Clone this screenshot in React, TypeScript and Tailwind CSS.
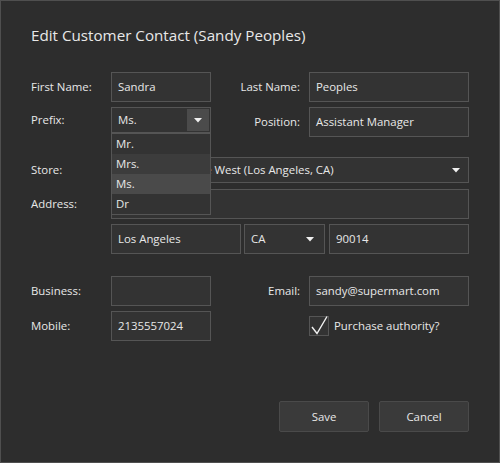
import React from "react";

const field = "h-[30px] border border-[#555555] bg-[#333333] px-[6px] flex items-center";

function Arrow() {
    return (
        <svg width="8" height="5" viewBox="0 0 8 5" className="block">
            <path d="M0 0 H8 L4 4.5 Z" fill="#f0f0f0" />
        </svg>
    );
}

function Label({ children, right }: { children: React.ReactNode; right?: boolean }) {
    return (
        <div className={right ? "flex-1 text-right pr-[9px]" : "w-[80px]"}>{children}</div>
    );
}

export default function App() {
    const prefixes = ["Mr.", "Mrs.", "Ms.", "Dr"];

    return (
        <div className="w-[500px] h-[463px] border border-[#4f4f4f] bg-[#2d2d2d] text-[#e8e8e8] text-[11.4px] font-['Open_Sans',sans-serif]">
            <div className="px-[30px] pt-[23px]">
                <h1 className="text-[15.2px] leading-[22px]">
                    Edit Customer Contact (Sandy Peoples)
                </h1>

                {/* name */}
                <div className="mt-[26px] flex items-center h-[30px]">
                    <Label>First Name:</Label>
                    <div className={`${field} w-[100px]`}>Sandra</div>
                    <Label right>Last Name:</Label>
                    <div className={`${field} w-[160px]`}>Peoples</div>
                </div>

                {/* prefix / position */}
                <div className="mt-[5px] flex items-start h-[30px]">
                    <div className="w-[80px] h-[26px] flex items-center">Prefix:</div>
                    <div className="relative w-[100px] h-[26px] border border-[#555555] bg-[#333333] flex items-center p-[1px]">
                        <span className="flex-1 pl-[5px]">Ms.</span>
                        <div className="w-[22px] h-full bg-[#4b4b4b] flex items-center justify-center">
                            <Arrow />
                        </div>
                        <div className="absolute left-[-1px] top-[25px] w-[100px] border border-[#555555] bg-[#333333] z-10">
                            {prefixes.map((p) => (
                                <div
                                    key={p}
                                    className={`h-[20px] pl-[4px] flex items-center ${
                                        p === "Ms." ? "bg-[#4a4a4a]" : p === "Mrs." ? "bg-[#3c3c3c]" : ""
                                    }`}
                                >
                                    {p}
                                </div>
                            ))}
                        </div>
                    </div>
                    <div className="flex-1 h-[30px] flex items-center justify-end pr-[9px]">Position:</div>
                    <div className={`${field} w-[160px]`}>Assistant Manager</div>
                </div>

                {/* store */}
                <div className="mt-[20px] flex items-center h-[26px]">
                    <Label>Store:</Label>
                    <div className="flex-1 h-[26px] border border-[#555555] bg-[#333333] flex items-center pl-[6px] pr-[8px]">
                        <span className="flex-1 whitespace-nowrap overflow-hidden">
                            Super Mart of the West (Los Angeles, CA)
                        </span>
                        <Arrow />
                    </div>
                </div>

                {/* address */}
                <div className="mt-[6px] flex items-center h-[30px]">
                    <Label>Address:</Label>
                    <div className={`${field} flex-1`}></div>
                </div>

                <div className="mt-[5px] flex items-center h-[30px]">
                    <div className="w-[80px]" />
                    <div className={`${field} w-[130px]`}>Los Angeles</div>
                    <div className={`${field} w-[81px] ml-[3px] justify-between pr-[10px]`}>
                        <span>CA</span>
                        <Arrow />
                    </div>
                    <div className={`${field} flex-1 ml-[4px]`}>90014</div>
                </div>

                {/* phones */}
                <div className="mt-[22px] flex items-center h-[30px]">
                    <Label>Business:</Label>
                    <div className={`${field} w-[100px]`}></div>
                    <Label right>Email:</Label>
                    <div className={`${field} w-[160px]`}>sandy@supermart.com</div>
                </div>

                <div className="mt-[5px] flex items-center h-[30px]">
                    <Label>Mobile:</Label>
                    <div className={`${field} w-[100px]`}>2135557024</div>
                    <div className="flex-1" />
                    <div className="w-[160px] flex items-center">
                        <div className="relative w-[20px] h-[20px] border border-[#555555] bg-[#333333]">
                            <svg
                                width="20"
                                height="22"
                                viewBox="0 0 20 22"
                                className="absolute left-[-1px] top-[-3px]"
                            >
                                <path
                                    d="M3 13 L8 19.5 L18 2.5"
                                    fill="none"
                                    stroke="#f2f2f2"
                                    strokeWidth="1.4"
                                />
                            </svg>
                        </div>
                        <span className="ml-[5px]">Purchase authority?</span>
                    </div>
                </div>

                {/* buttons */}
                <div className="mt-[60px] flex justify-end gap-[10px]">
                    <button className="w-[90px] h-[31px] rounded-[2px] border border-[#4a4a4a] bg-[#3a3a3a] text-[#e8e8e8]">
                        Save
                    </button>
                    <button className="w-[90px] h-[31px] rounded-[2px] border border-[#4a4a4a] bg-[#3a3a3a] text-[#e8e8e8]">
                        Cancel
                    </button>
                </div>
            </div>
        </div>
    );
}
